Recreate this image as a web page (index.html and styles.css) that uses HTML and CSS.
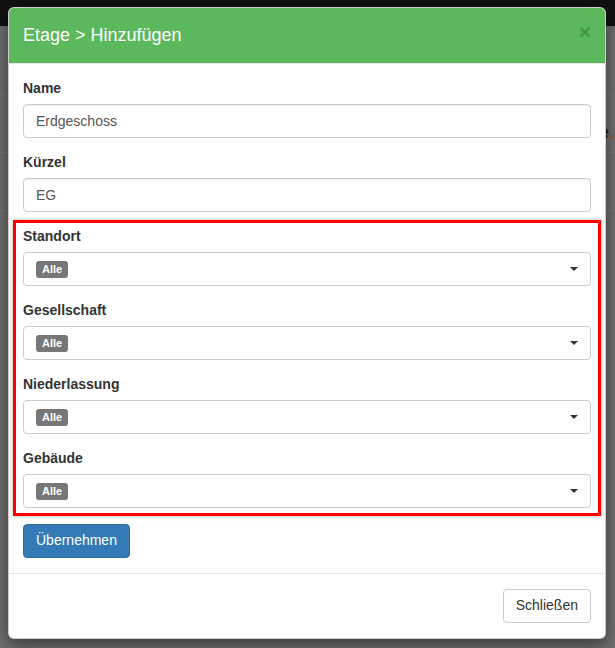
FILE: index.html
```html
<!DOCTYPE html>
<html lang="de">
<head>
<meta charset="UTF-8" />
<meta name="viewport" content="width=device-width, initial-scale=1" />
<title>Etage hinzufügen</title>
<link rel="stylesheet" href="styles.css">
</head>
<body>
<div class="page">
  <div class="navbar"></div>
  <div class="page-toolbar"></div>
  <div class="page-row"><span class="page-title">Etage</span><span class="page-dot">.</span></div>
  <div class="page-row"></div>
</div>

<div class="modal" role="dialog" aria-labelledby="modal-title">
  <div class="modal-content">
    <div class="modal-header">
      <button type="button" class="close" aria-label="Close">&times;</button>
      <h4 class="modal-title" id="modal-title">Etage &gt; Hinzufügen</h4>
    </div>
    <div class="modal-body">
      <form>
        <div class="form-group">
          <label for="name">Name</label>
          <input type="text" id="name" class="form-control" value="Erdgeschoss">
        </div>
        <div class="form-group">
          <label for="short">Kürzel</label>
          <input type="text" id="short" class="form-control" value="EG">
        </div>
        <div class="filter-box">
          <div class="form-group">
            <label>Standort</label>
            <div class="select-toggle"><span class="label-tag">Alle</span><span class="caret"></span></div>
          </div>
          <div class="form-group">
            <label>Gesellschaft</label>
            <div class="select-toggle"><span class="label-tag">Alle</span><span class="caret"></span></div>
          </div>
          <div class="form-group">
            <label>Niederlassung</label>
            <div class="select-toggle"><span class="label-tag">Alle</span><span class="caret"></span></div>
          </div>
          <div class="form-group">
            <label>Gebäude</label>
            <div class="select-toggle"><span class="label-tag">Alle</span><span class="caret"></span></div>
          </div>
        </div>
        <button type="button" class="btn btn-primary">Übernehmen</button>
      </form>
    </div>
    <div class="modal-footer">
      <button type="button" class="btn btn-default">Schließen</button>
    </div>
  </div>
</div>
</body>
</html>
```

FILE: styles.css
```css
:root {
  --green: #5cb85c;
  --blue: #337ab7;
  --border: #ccc;
  --text: #333;
  --font: "Liberation Sans", Arial, Helvetica, sans-serif;
}

*, *::before, *::after {
  box-sizing: border-box;
}

html, body {
  margin: 0;
  height: 100%;
  font-family: var(--font);
  font-size: 14px;
  line-height: 1.42857;
  color: var(--text);
  background: #6e6e6e;
  overflow: hidden;
}

/* Page behind the backdrop */
.navbar {
  height: 26px;
  background: #111;
}
.page-toolbar {
  height: 69px;
  border-bottom: 1px solid #777;
}
.page-row {
  height: 58px;
  border-bottom: 1px solid #777;
  display: flex;
  align-items: flex-end;
  justify-content: flex-end;
  padding: 0 1px 6px 0;
}
.page-title {
  font-size: 18px;
  font-weight: bold;
  color: #222;
}
.page-dot {
  color: #8a5a1a;
  font-weight: bold;
  font-size: 18px;
}

/* Modal */
.modal {
  position: absolute;
  top: 7px;
  left: 8px;
  width: 598px;
}
.modal-content {
  background: #fff;
  border: 1px solid rgba(0,0,0,0.2);
  border-radius: 6px;
  box-shadow: 0 5px 15px rgba(0,0,0,0.5);
}
.modal-header {
  background: var(--green);
  color: #fff;
  padding: 15px 14px 14.5px;
  border-bottom: 1px solid #e5e5e5;
  border-radius: 5px 5px 0 0;
}
.modal-title {
  margin: 0;
  font-size: 18px;
  font-weight: normal;
  line-height: 1.42857;
}
.close {
  float: right;
  margin-top: -2px;
  padding: 0;
  border: 0;
  background: transparent;
  font-family: var(--font);
  font-size: 21px;
  font-weight: bold;
  line-height: 1;
  color: #000;
  opacity: 0.2;
  cursor: pointer;
}

.modal-body {
  padding: 15px 14px;
}
.form-group {
  margin-bottom: 15px;
}
label {
  display: block;
  margin-bottom: 5px;
  font-weight: bold;
}
.form-control {
  display: block;
  width: 100%;
  height: 34px;
  padding: 6px 12px;
  font-family: var(--font);
  font-size: 14px;
  color: #555;
  background: #fff;
  border: 1px solid var(--border);
  border-radius: 4px;
  box-shadow: inset 0 1px 1px rgba(0,0,0,0.075);
}

/* Highlighted filter group */
.filter-box {
  margin: -7px -10px 8px;
  padding: 4px 7px 5px;
  border: 3px solid #f00;
  box-shadow: 0 0 4px rgba(0,0,0,0.35);
}
.filter-box .form-group:last-child {
  margin-bottom: 0;
}
.select-toggle {
  display: flex;
  align-items: center;
  justify-content: space-between;
  height: 34px;
  padding: 0 12px;
  border: 1px solid var(--border);
  border-radius: 4px;
  background: #fff;
}
.label-tag {
  display: inline-block;
  padding: 3px 6px;
  font-size: 11px;
  font-weight: bold;
  line-height: 1;
  color: #fff;
  background: #777;
  border-radius: 3px;
}
.caret {
  width: 0;
  height: 0;
  border-top: 4px solid #333;
  border-left: 4px solid transparent;
  border-right: 4px solid transparent;
}

/* Buttons */
.btn {
  display: inline-block;
  height: 34px;
  padding: 6px 12px;
  font-family: var(--font);
  font-size: 14px;
  line-height: 1.42857;
  border: 1px solid transparent;
  border-radius: 4px;
  cursor: pointer;
}
.btn-primary {
  color: #fff;
  background: var(--blue);
  border-color: #2e6da4;
}
.btn-default {
  color: var(--text);
  background: #fff;
  border-color: var(--border);
}

.modal-footer {
  padding: 15px 14px;
  text-align: right;
  border-top: 1px solid #e5e5e5;
}
```
